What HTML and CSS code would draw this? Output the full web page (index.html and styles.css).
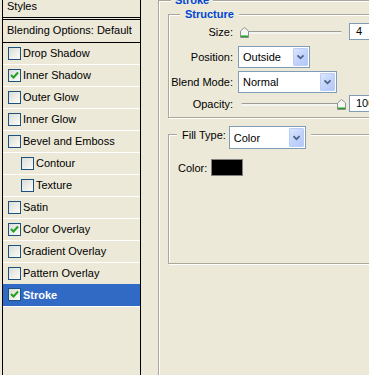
FILE: index.html
```html
<!DOCTYPE html>
<html lang="en">
<head>
  <meta charset="UTF-8">
  <meta name="viewport" content="width=device-width, initial-scale=1.0">
  <title>Layer Style - Stroke</title>
  <link rel="stylesheet" href="styles.css">
</head>
<body>
  <div class="dialog">
    <!-- left column: list of styles -->
    <div class="styles-list">
      <div class="list-head">Styles</div>
      <div class="list-blend">Blending Options: Default</div>
      <ul class="effects">
        <li class="effect"><span class="check"></span>Drop Shadow</li>
        <li class="effect"><span class="check checked"><svg viewBox="0 0 11 11"><path d="M2 5 L4.5 7.5 L9 2.5" /></svg></span>Inner Shadow</li>
        <li class="effect"><span class="check"></span>Outer Glow</li>
        <li class="effect"><span class="check"></span>Inner Glow</li>
        <li class="effect"><span class="check"></span>Bevel and Emboss</li>
        <li class="effect sub"><span class="check"></span>Contour</li>
        <li class="effect sub"><span class="check"></span>Texture</li>
        <li class="effect"><span class="check"></span>Satin</li>
        <li class="effect"><span class="check checked"><svg viewBox="0 0 11 11"><path d="M2 5 L4.5 7.5 L9 2.5" /></svg></span>Color Overlay</li>
        <li class="effect"><span class="check"></span>Gradient Overlay</li>
        <li class="effect"><span class="check"></span>Pattern Overlay</li>
        <li class="effect selected"><span class="check checked"><svg viewBox="0 0 11 11"><path d="M2 5 L4.5 7.5 L9 2.5" /></svg></span>Stroke</li>
      </ul>
    </div>

    <!-- right column: stroke settings -->
    <div class="panel">
      <div class="group group-stroke">
        <div class="group-title title-stroke">Stroke</div>

        <div class="group group-structure">
          <div class="group-title title-structure">Structure</div>

          <div class="field field-size">
            <span class="field-label">Size:</span>
            <div class="slider">
              <div class="slider-track"></div>
              <svg class="slider-thumb" style="left: 2px" viewBox="0 0 9 11"><path class="thumb-body" d="M0.5 10.5 V4 L4.5 0.5 L8.5 4 V10.5 Z" /><path class="thumb-green" d="M1 8.5 H8 V10 H1 Z" /></svg>
            </div>
            <span class="num">4</span>
          </div>

          <div class="field field-position">
            <span class="field-label">Position:</span>
            <div class="select select-position">
              <span class="select-text">Outside</span>
              <span class="select-btn"><svg viewBox="0 0 15 18"><path d="M4 7 L7.5 10.5 L11 7" /></svg></span>
            </div>
          </div>

          <div class="field field-blend">
            <span class="field-label">Blend Mode:</span>
            <div class="select select-blend">
              <span class="select-text">Normal</span>
              <span class="select-btn"><svg viewBox="0 0 15 18"><path d="M4 7 L7.5 10.5 L11 7" /></svg></span>
            </div>
          </div>

          <div class="field field-opacity">
            <span class="field-label">Opacity:</span>
            <div class="slider">
              <div class="slider-track"></div>
              <svg class="slider-thumb" style="left: 99px" viewBox="0 0 9 11"><path class="thumb-body" d="M0.5 10.5 V4 L4.5 0.5 L8.5 4 V10.5 Z" /><path class="thumb-green" d="M1 8.5 H8 V10 H1 Z" /></svg>
            </div>
            <span class="num">100</span>
          </div>
        </div>

        <div class="group group-fill">
          <div class="group-title title-fill">
            <span class="fill-label">Fill Type:</span>
            <div class="select select-fill">
              <span class="select-text">Color</span>
              <span class="select-btn"><svg viewBox="0 0 15 18"><path d="M4 7.5 L7.5 11 L11 7.5" /></svg></span>
            </div>
          </div>
          <div class="color-row">
            <span>Color:</span>
            <span class="swatch"></span>
          </div>
        </div>
      </div>
    </div>
  </div>
</body>
</html>
```

FILE: styles.css
```css
:root {
  --dialog-bg: #ece9d8;
  --etch-dark: #aca899;
  --xp-blue-border: #7f9db9;
  --title-blue: #0046d5;
  --select-blue: #316ac5;
}
* {
  box-sizing: border-box;
}
html, body {
  margin: 0;
  padding: 0;
  height: 100%;
  overflow: hidden;
}
body {
  background-color: var(--dialog-bg);
  font-family: 'Liberation Sans', Arial, sans-serif;
  font-size: 11px;
  color: #000;
}
.dialog {
  display: flex;
  height: 375px;
}

/* styles list */
.styles-list {
  width: 139px;
  margin-left: 2px;
  border-left: 1px solid #000;
  border-right: 1px solid #000;
  flex-shrink: 0;
}
.list-head {
  height: 20px;
  padding-left: 4px;
  line-height: 12px;
  border-bottom: 3px double #000;
}
.list-blend {
  height: 23px;
  padding-left: 4px;
  line-height: 21px;
  border-bottom: 1px solid #000;
}
.effects {
  list-style: none;
  margin: 0;
  padding: 0;
}
.effect {
  display: flex;
  align-items: center;
  gap: 2px;
  height: 22px;
  padding-left: 5px;
  padding-bottom: 1px;
  border-bottom: 1px solid #fff;
}
.effect.sub {
  padding-left: 18px;
}
.effect.selected {
  margin-top: -1px;
  height: 23px;
  background-color: var(--select-blue);
  color: #fff;
  font-weight: bold;
}
.check {
  width: 13px;
  height: 13px;
  border: 1px solid #1c5180;
  background: linear-gradient(135deg, #dcdcd7 0%, #f5f5f2 80%, #fff 100%);
  flex-shrink: 0;
  display: flex;
}
.check svg {
  width: 11px;
  height: 11px;
}
.check path {
  fill: none;
  stroke: #21a121;
  stroke-width: 2;
}

/* right side groups */
.panel {
  flex: 1;
  min-width: 0;
  padding-left: 17px;
}
.group {
  border: 1px solid var(--etch-dark);
  box-shadow: inset 1px 1px 0 #fff, 1px 1px 0 #fff;
}
.group-title {
  width: fit-content;
  height: 13px;
  line-height: 13px;
  margin-top: -7px;
  background-color: var(--dialog-bg);
  color: var(--title-blue);
  font-weight: bold;
}
.group-stroke {
  width: 260px;
  height: 420px;
  padding-left: 9px;
}
.title-stroke {
  margin-left: 3px;
  padding: 0 4px;
}
.group-structure {
  width: 240px;
  margin-top: 7px;
  padding-bottom: 5px;
}
.title-structure {
  margin-left: 11px;
  padding: 0 5px;
}
.field {
  display: flex;
  align-items: center;
}
.field-label {
  width: 64px;
  margin-right: 5px;
  text-align: right;
}
.field-size {
  height: 17px;
  margin-top: 2px;
}
.field-position {
  height: 22px;
  margin-top: 6px;
}
.field-blend {
  height: 22px;
  margin-top: 3px;
}
.field-opacity {
  height: 17px;
  margin-top: 2px;
}

/* slider */
.slider {
  position: relative;
  width: 107px;
  height: 17px;
}
.slider-track {
  position: absolute;
  left: 3px;
  right: 3px;
  top: 8px;
  height: 3px;
  border-top: 1px solid #9d9d98;
  border-radius: 2px;
  background-color: #f4f4f0;
}
.slider-thumb {
  position: absolute;
  top: 4px;
  width: 9px;
  height: 11px;
}
.thumb-body {
  fill: #f6f6f3;
  stroke: #8c9292;
  stroke-width: 1;
}
.thumb-green {
  fill: #21a121;
}
.num {
  width: 40px;
  height: 17px;
  margin-left: 4px;
  padding-left: 6px;
  line-height: 15px;
  border: 1px solid var(--xp-blue-border);
  background-color: #fff;
}

/* dropdowns */
.select {
  display: flex;
  justify-content: space-between;
  height: 22px;
  padding: 1px;
  border: 1px solid var(--xp-blue-border);
  background-color: #fff;
}
.select-text {
  padding-left: 3px;
  line-height: 18px;
  color: #000;
  font-weight: normal;
}
.select-btn {
  width: 15px;
  border: 1px solid #bacdf6;
  border-radius: 1px;
  background: linear-gradient(135deg, #dce6fe 0%, #c3d4fb 50%, #b3c8f7 100%);
}
.select-btn svg {
  width: 13px;
  height: 100%;
  display: block;
}
.select-btn path {
  fill: none;
  stroke: #4d6185;
  stroke-width: 2;
}
.select-position {
  width: 72px;
}
.select-blend {
  width: 99px;
}

/* fill type */
.group-fill {
  width: 240px;
  margin-top: 16px;
  padding-bottom: 87px;
}
.title-fill {
  display: flex;
  align-items: flex-start;
  gap: 3px;
  height: 23px;
  margin-top: -9px;
  margin-left: 8px;
  padding: 0 5px;
  color: #000;
  font-weight: normal;
}
.fill-label {
  padding-top: 3px;
}
.select-fill {
  width: 77px;
  height: 23px;
}
.select-fill .select-text {
  line-height: 20px;
}
.color-row {
  display: flex;
  align-items: center;
  gap: 4px;
  height: 17px;
  margin-top: 10px;
  margin-left: 9px;
}
.swatch {
  width: 32px;
  height: 17px;
  border: 1px solid #808080;
  background-color: #000;
}
```
